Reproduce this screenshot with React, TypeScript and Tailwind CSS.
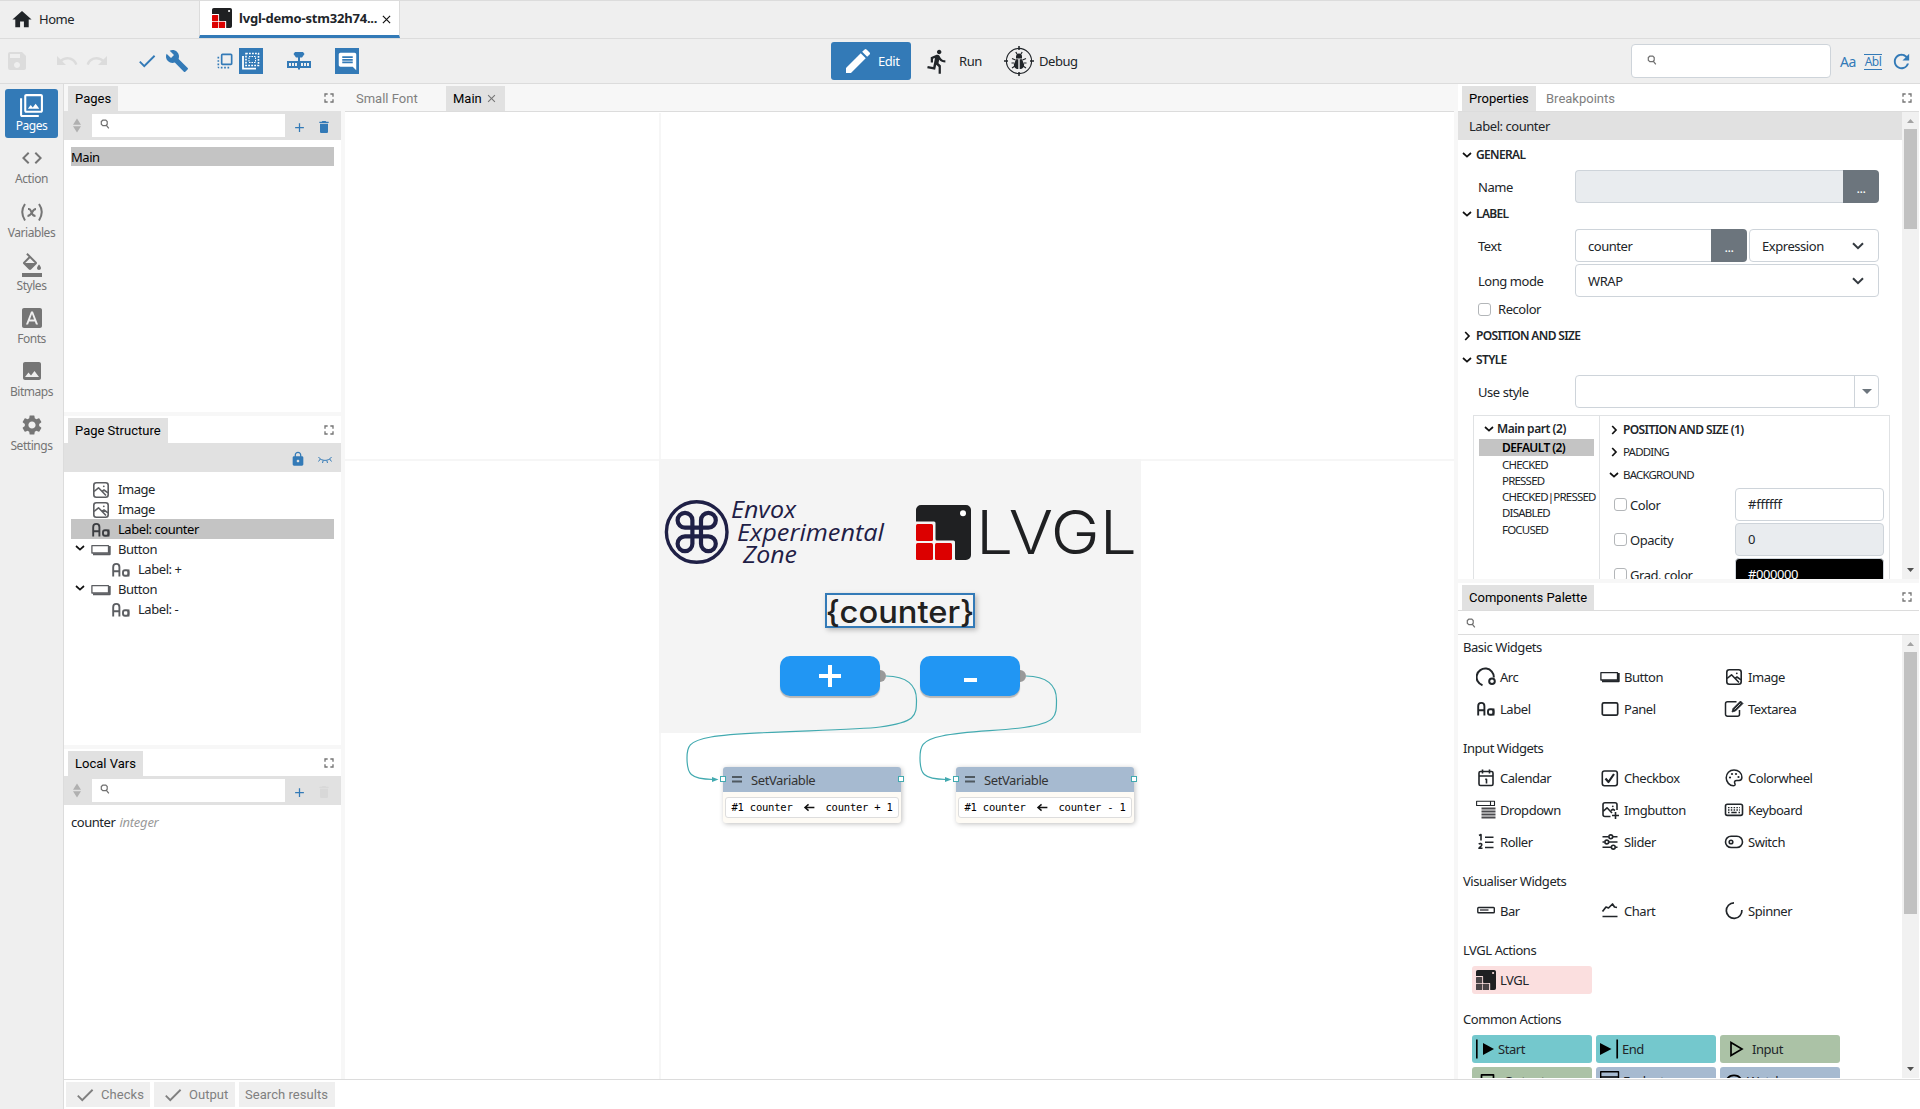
import React from "react";
import {
  MdHome, MdSave, MdUndo, MdRedo, MdCheck, MdBuild, MdFlipToFront, MdComment, MdFilter, MdCode,
  MdFormatColorFill, MdFontDownload, MdImage, MdSettings, MdEdit, MdDirectionsRun, MdRefresh, MdFullscreen,
  MdDelete, MdLock, MdAdd, MdClose,
} from "react-icons/md";

const SearchIcon = ({ className = "" }: { className?: string }) => (
  <svg viewBox="0 0 10 10" className={`h-[10px] w-[10px] shrink-0 ${className}`} fill="none" stroke="#6f6f6f" strokeWidth="1.2">
    <path d="M2.8 1.2H5.8L7.2 2.6V5.2L5.8 6.6H2.8L1.3 5.2V2.6ZM6.3 6.1L8.8 9.3" />
  </svg>
);

const Chevron = ({ open = true, className = "" }: { open?: boolean; className?: string }) => (
  <svg viewBox="0 0 10 10" className={`h-[10px] w-[10px] shrink-0 ${className}`} fill="none" stroke="#111" strokeWidth="1.7">
    <path d={open ? "M1 3L5 6.6L9 3" : "M3.2 1L7 5L3.2 9"} />
  </svg>
);

const Maximize = () => <MdFullscreen className="h-[16px] w-[16px] shrink-0 text-[#757575]" />;

const Sorter = () => (
  <svg viewBox="0 0 8 14" className="h-[15px] w-[8px] shrink-0" fill="#b0b0b0">
    <path d="M4 0L8 6.3H0ZM4 14L8 7.7H0Z" />
  </svg>
);

const LvglMark = ({ red = "#dc0000", gap = "#fff", className = "" }: { red?: string; gap?: string; className?: string }) => (
  <svg viewBox="0 0 55 55" className={`shrink-0 ${className}`}>
    <path fill="#1f2022" d="M5 0H50a5 5 0 0 1 5 5V50a5 5 0 0 1-5 5H40.500a1.500 1.500 0 0 1-1.500-1.500V37a1.500 1.500 0 0 0-1.500-1.500H21a1.500 1.500 0 0 1-1.500-1.500V18a1.500 1.500 0 0 0-1.500-1.500H0V5a5 5 0 0 1 5-5Z" />
    <g fill={red}>
      <rect y="19" width="17" height="17" rx="1.500" />
      <rect y="38" width="17" height="17" rx="1.500" />
      <rect x="19" y="38" width="17" height="17" rx="1.500" />
    </g>
    <circle cx="47" cy="8.200" r="3" fill={gap} />
  </svg>
);

const Ico = ({ children, className = "h-5 w-5", w = 1.7 }: { children: React.ReactNode; className?: string; w?: number }) => (
  <svg viewBox="0 0 20 20" className={`shrink-0 ${className}`} fill="none" stroke="currentColor" strokeWidth={w} strokeLinejoin="round">
    {children}
  </svg>
);

const ImageI = () => (
  <Ico w={1.6}>
    <rect x="2.800" y="2.800" width="14.400" height="14.400" rx="2.500" />
    <path d="M3 11.500L7.500 7.800L15 15.500M11 11.500L13 10L17 12.800" />
    <circle cx="12.800" cy="6.300" r="0.900" fill="currentColor" stroke="none" />
  </Ico>
);
const ButtonI = () => (
  <Ico w={1.3}>
    <path d="M0.900 5.700H17.500V13H0.900Z" />
    <path d="M18.700 6V14.300H2" strokeWidth="2" />
  </Ico>
);
const LabelI = () => (
  <Ico w={1.9}>
    <path d="M2.200 16.500V7A3.100 3.100 0 0 1 8.400 7V16.500M2.200 11.300H8.400" />
    <path d="M17.500 9.500V16.500" />
    <rect x="12" y="10.300" width="5.500" height="5.400" rx="2" />
  </Ico>
);

const icons: Record<string, React.ReactNode> = {
  Arc: <Ico w={2}><path d="M6.500 18.300A8.600 8.600 0 1 1 17.800 10.500" /><circle cx="16" cy="14.300" r="2.800" /></Ico>,
  Button: <ButtonI />,
  Image: <ImageI />,
  Label: <LabelI />,
  Panel: <Ico><rect x="2.300" y="3.800" width="15.400" height="12.400" rx="1.500" /></Ico>,
  Textarea: <Ico w={1.500}><path d="M12.500 2.800H3.500A2 2 0 0 0 1.500 4.800V15.200A2 2 0 0 0 3.500 17.200H13.500A2 2 0 0 0 15.500 15.200V11" /><path d="M8 13L9 9.500L16.500 2L19 4.500L11.500 12Z" fill="currentColor" strokeWidth="0.800" /><path d="M10.500 10.500L16.500 4.500" stroke="#fff" strokeWidth="0.700" /></Ico>,
  Calendar: <Ico w={1.6}><rect x="3" y="3.500" width="14" height="14" rx="1.500" /><path d="M3 8H17M6.500 1.500V5.500M13.500 1.500V5.500M9.200 11.300H10.500V15.500" /></Ico>,
  Checkbox: <Ico w={1.6}><rect x="2.300" y="3" width="15" height="14.800" rx="2.200" /><path d="M5.500 10.500L8.500 14L14 6" strokeWidth="2.200" /></Ico>,
  Colorwheel: <Ico w={1.500}><path d="M10 2C5.500 2 2.200 5.300 2.200 9.800C2.200 14 5.500 17.800 9.500 17.800C11.500 17.800 11.300 16.300 10.700 15.200C10 13.500 11 12.500 12.500 12.500H15C17 12.500 17.900 11 17.900 9.300C17.900 5 14.500 2 10 2Z" /><g fill="currentColor" stroke="none"><circle cx="6" cy="9.500" r="1.100" /><circle cx="8" cy="6" r="1.100" /><circle cx="12" cy="6" r="1.100" /><circle cx="14.500" cy="9" r="1.100" /></g></Ico>,
  Dropdown: <Ico w={1.100}><path d="M0.600 1.200H18.500V5.500H0.600ZM14.500 1.200V5.500" /><path d="M5.500 8.500H19.500M5.500 11.500H19.500M5.500 14.500H19.500M5.500 17.500H19.500" strokeWidth="2" stroke="#4b4b4f" /></Ico>,
  Imgbutton: <Ico w={1.6}><path d="M17 10V4.800A2 2 0 0 0 15 2.800H5A2 2 0 0 0 3 4.800V14.500A2 2 0 0 0 5 16.500H10.500M3 11.500L7 7.800L12 13M11 10.500L13 9.300L15 10.500M15.500 12V19M12 15.500H19" /><circle cx="12.800" cy="6.300" r="0.900" fill="currentColor" stroke="none" /></Ico>,
  Keyboard: <Ico w={1.6}><rect x="1.500" y="4.200" width="17" height="11.200" rx="1.800" /><path d="M4 7.700H16M4 10H16" strokeDasharray="1.500 1.300" strokeWidth="1.300" /><path d="M4 12.500H5.500M7.300 12.500H12.700M14.500 12.500H16" strokeWidth="1.300" /></Ico>,
  Roller: <Ico w={1.6}><path d="M9 5.200H17.500M9 10.200H17.500M9 15.500H17.500M3 3.500L5 2.500V8.500M2.800 12.300C3.800 11 6 11.500 5.800 13C5.700 14 4 15 3 16.300H6.500" /></Ico>,
  Slider: <Ico w={1.6}><path d="M2.500 4.800H8.500M13 4.800H17.500M2.500 10H4.500M9 10H17.500M2.500 15.200H11M15.500 15.200H17.500" /><circle cx="10.800" cy="4.800" r="1.900" /><circle cx="6.800" cy="10" r="1.900" /><circle cx="13.300" cy="15.200" r="1.900" /></Ico>,
  Switch: <Ico w={1.6}><rect x="1.500" y="4.300" width="17" height="11.200" rx="5.600" /><circle cx="7" cy="10" r="1.800" /></Ico>,
  Bar: <Ico w={1.400}><rect x="1.800" y="6.500" width="16.500" height="5.200" rx="0.800" /><path d="M4 9H12.500" strokeWidth="2" stroke="#77777b" /></Ico>,
  Chart: <Ico><path d="M2.500 10.500L6 6L8.500 7L12.500 3L14.500 6L17 6.500M2.500 15.500H17.500" /></Ico>,
  Spinner: <Ico><path d="M10 1.800A7.800 7.800 0 1 0 17.900 9" /></Ico>,
  LVGL: <LvglMark red="#4a4446" gap="#fbdfdf" className="h-5 w-5" />,
  Start: <Ico><path d="M0.800 0.500V19.500" stroke="#000" /><path d="M7 4L18 10L7 16Z" fill="#000" stroke="none" /></Ico>,
  End: <Ico><path d="M17.200 0.500V19.500" stroke="#000" /><path d="M0 4L11.500 10L0 16Z" fill="#000" stroke="none" /></Ico>,
  Input: <Ico><path d="M7 3.500L18 10L7 16.500Z" stroke="#000" strokeLinejoin="miter" /></Ico>,
  Output: <Ico><rect x="5.500" y="3.800" width="12" height="13" stroke="#000" /></Ico>,
  Evaluate: <Ico className="h-5 w-5" w={1.400}><path d="M0.700 0.700H18.500V18H0.700ZM0.700 6H18.500" stroke="#000" /></Ico>,
  Watch: <Ico><path d="M2 10C5 2.500 15 2.500 18 10C15 17 5 17 2 10Z" stroke="#000" /></Ico>,
};

const tint: Record<string, string> = {
  LVGL: "bg-[#fbdfdf]", Start: "bg-[#74c8cd]", End: "bg-[#74c8cd]", Input: "bg-[#abc2a6]", Output: "bg-[#abc2a6]",
  Evaluate: "bg-[#a6bad0]", Watch: "bg-[#a6bad0]",
};
const indent: Record<string, string> = { Start: "ml-[2px]", End: "ml-[2px]", Input: "ml-[8px]", Output: "ml-[8px]", Evaluate: "ml-[3px]", Watch: "ml-[3px]" };

const sections: [string, string[]][] = [
  ["Basic Widgets", ["Arc", "Button", "Image", "Label", "Panel", "Textarea"]],
  ["Input Widgets", ["Calendar", "Checkbox", "Colorwheel", "Dropdown", "Imgbutton", "Keyboard", "Roller", "Slider", "Switch"]],
  ["Visualiser Widgets", ["Bar", "Chart", "Spinner"]],
  ["LVGL Actions", ["LVGL"]],
  ["Common Actions", ["Start", "End", "Input", "Output", "Evaluate", "Watch"]],
];

const Tab = ({ children, active = false, className = "" }: { children: React.ReactNode; active?: boolean; className?: string }) => (
  <div className={`flex h-[25px] items-center px-[7px] font-['Roboto'] text-[13px] tracking-[0px] ${active ? "bg-[#e1e1e1] text-black" : "text-[#808080]"} ${className}`}>
    {children}
  </div>
);

const PanelHead = ({ title, gray = false }: { title: string; gray?: boolean }) => (
  <div className={`flex h-[27px] shrink-0 items-end justify-between pl-1 ${gray ? "bg-[#f7f7f7]" : "bg-white"}`}>
    <Tab active>{title}</Tab>
    <div className="flex h-[27px] items-center pr-[4px]"><Maximize /></div>
  </div>
);

const ListTools = ({ disabled = false }: { disabled?: boolean }) => (
  <div className="flex h-[29px] shrink-0 items-center bg-[#e1e1e1] pl-[9px]">
    <Sorter />
    <div className="ml-[11px] flex h-[23px] w-[193px] items-center bg-white pl-[8px]"><SearchIcon className="mb-[3px]" /></div>
    <MdAdd className="ml-[7px] mt-[3px] h-[15px] w-[15px] text-[#337ab7]" />
    <MdDelete className={`ml-[9px] mt-[3px] h-[16px] w-[16px] ${disabled ? "text-[#d8d8d8]" : "text-[#337ab7]"}`} />
  </div>
);

const NavItem = ({ icon, label, active = false }: { icon: React.ReactNode; label: string; active?: boolean }) => (
  <div className={`mx-auto mb-[4.300px] flex h-[49px] w-[53px] shrink-0 flex-col items-center rounded-[3px] text-[12px] tracking-[-0.450px] ${active ? "bg-[#337ab7] text-white" : "text-[#757575]"}`}>
    <div className="mt-[4px] flex h-6 items-center">{icon}</div>
    <div className="mt-px leading-[16px]">{label}</div>
  </div>
);

const TreeRow = ({ icon, label, depth = 0, open = false, selected = false }: { icon: React.ReactNode; label: string; depth?: number; open?: boolean; selected?: boolean }) => (
  <div className={`flex h-5 items-center ${selected ? "bg-[#c4c4c4] text-black" : ""}`}>
    <div className={`flex justify-end ${depth ? "w-[34px]" : "w-[14px]"}`}>{open && <Chevron className="mb-[3px]" />}</div>
    <div className={`ml-[6px] mt-[2px] flex h-5 w-5 items-center ${selected ? "text-[#3c3e42]" : "text-[#5c5e62]"}`}>{icon}</div>
    <span className="ml-[7px] pt-[2px]">{label}</span>
  </div>
);

const Heading = ({ children, open = true, className = "" }: { children: React.ReactNode; open?: boolean; className?: string }) => (
  <div className={`flex items-center gap-[4px] pl-[4px] text-[12px] font-semibold tracking-[-0.650px] ${className}`}>
    <Chevron open={open} />
    {children}
  </div>
);

const Label = ({ children }: { children: React.ReactNode }) => <span className="w-[96px] -translate-x-px pt-[2px]">{children}</span>;

const Box = ({ children, className = "" }: { children?: React.ReactNode; className?: string }) => (
  <div className={`flex h-[33px] items-center border border-[#ced4da] px-[12px] ${className}`}>{children}</div>
);
const Dots = () => <div className="flex h-[33px] w-[36px] shrink-0 items-center justify-center rounded-r-[4px] bg-[#6c757d] pt-[4px] text-white">...</div>;
const SelectArrow = () => (
  <svg viewBox="0 0 12 8" className="mb-[2px] ml-auto mr-[2px] h-[8px] w-[12px]" fill="none" stroke="#343a40" strokeWidth="2"><path d="M1 1.200L6 6.200L11 1.200" /></svg>
);
const Check = ({ className = "" }: { className?: string }) => <div className={`h-[13px] w-[13px] shrink-0 rounded-[3px] border border-[#b3b6b9] bg-white ${className}`} />;

const StyleRow = ({ label, value, className = "" }: { label: string; value: string; className?: string }) => (
  <div className="flex items-center pl-[15px]">
    <Check className="-ml-px" />
    <span className="ml-[3px] w-[105px] pt-[2px]">{label}</span>
    <Box className={`w-[149px] rounded-[4px] pt-px ${className}`}>{value}</Box>
  </div>
);

const ScrollBar = ({ thumb }: { thumb: string }) => (
  <div className="flex w-[17px] shrink-0 flex-col items-center bg-[#f1f1f1]">
    <svg viewBox="0 0 17 17" className="h-[17px] w-[17px]" fill="#a3a3a3"><path d="M5 11L8.500 7L12 11Z" /></svg>
    <div className={`w-[13px] bg-[#c1c1c1] ${thumb}`} />
    <svg viewBox="0 0 17 17" className="mt-auto h-[17px] w-[17px]" fill="#505050"><path d="M5 6L8.500 10L12 6Z" /></svg>
  </div>
);

const SetVariable = ({ expr, className }: { expr: string; className: string }) => (
  <div className={`absolute top-[655px] h-[56px] w-[178px] rounded-[3px] bg-[#fefbf5] shadow-[1px_1px_5px_rgba(0,0,0,0.25)] ${className}`}>
    <div className="flex h-[25px] items-center rounded-t-[3px] bg-[#a6bad0] pl-[9px] text-[#333]">
      <svg viewBox="0 0 10 7" className="h-[7px] w-[10px]" fill="#4f5961"><path d="M0 0H10V2H0ZM0 4.500H10V6.500H0Z" /></svg>
      <span className="ml-[9px] pt-[2px] tracking-[-0.400px]">SetVariable</span>
    </div>
    <div className="mx-[2px] mt-[5px] flex h-[21px] items-center whitespace-nowrap rounded-[3px] border border-[#ddd] bg-white pl-[5.500px] font-['DejaVu_Sans_Mono'] text-[10.500px] tracking-[-0.220px] text-black">
      #1 counter
      <svg viewBox="0 0 12 10" className="ml-[10.500px] mr-[10.500px] h-[9px] w-[12px]" fill="none" stroke="#111" strokeWidth="1.600"><path d="M12 5H2M5.500 1.500L1.500 5L5.500 8.500" /></svg>
      {expr}
    </div>
    <div className="absolute -left-[3px] top-[9px] h-[6px] w-[6px] border border-[#42aab0] bg-white" />
    <div className="absolute -right-[3px] top-[9px] h-[6px] w-[6px] border border-[#42aab0] bg-white" />
  </div>
);

const CanvasButton = ({ sign, className }: { sign: React.ReactNode; className: string }) => (
  <>
    <div className={`absolute top-[558px] h-[12px] w-[12px] rounded-full bg-[#999] ${className}`} />
    <div className={`absolute top-[544px] -ml-[94px] flex h-[40px] w-[100px] items-center justify-center rounded-[10px] bg-[#2196f3] shadow-[0_2px_1px_rgba(0,0,0,0.25)] ${className}`}>{sign}</div>
  </>
);

function Canvas() {
  return (
    <div className="relative min-h-0 flex-1 overflow-hidden bg-white">
      <div className="absolute left-[314px] top-[1px] h-full w-[2px] bg-[#f6f6f6]" />
      <div className="absolute left-0 top-[347px] h-[2px] w-full bg-[#f6f6f6]" />
      <div className="absolute left-[314px] top-[347px] h-[274px] w-[482px] bg-[#f4f4f4]" />

      <svg className="absolute left-[319px] top-[388px] h-[80px] w-[230px]" viewBox="664 500 230 80">
        <g fill="none" stroke="#1f2046">
          <circle cx="696.700" cy="532" r="30.300" strokeWidth="3.400" />
          <path transform="translate(696.700 532)" strokeWidth="4.200" d="M-4.300-11.700V11.700A7.400 7.400 0 1 1-11.700 4.300H11.700A7.400 7.400 0 1 1 4.300 11.700V-11.700A7.400 7.400 0 1 1 11.700-4.300H-11.700A7.400 7.400 0 1 1-4.300-11.700Z" />
        </g>
        <g className="font-['Open_Sans'] text-[24px] italic tracking-[0px]" fill="#1f2046">
          <text x="731" y="518.300" textLength="65" lengthAdjust="spacingAndGlyphs">Envox</text>
          <text x="737" y="540.500" textLength="147" lengthAdjust="spacingAndGlyphs">Experimental</text>
          <text x="743" y="563" textLength="54" lengthAdjust="spacingAndGlyphs">Zone</text>
        </g>
      </svg>

      <LvglMark className="absolute left-[571px] top-[393px] h-[55px] w-[55px]" />
      <svg className="absolute left-[631px] top-[383px] h-[75px] w-[165px]" viewBox="976 495 165 75">
        <text x="976" y="554.300" textLength="161" lengthAdjust="spacingAndGlyphs" fill="#1f2022" className="font-['Inter'] text-[60px] font-light tracking-[0px]">LVGL</text>
      </svg>

      <div className="absolute left-[480px] top-[481px] h-[35px] w-[150px] border-2 border-[#337ab7] bg-[#f4f4f4] shadow-[2px_2px_5px_rgba(0,0,0,0.25)]" />
      <svg className="absolute left-[480px] top-[481px] h-[40px] w-[150px]" viewBox="0 0 150 40">
        <text x="0.500" y="29.500" textLength="149" lengthAdjust="spacingAndGlyphs" fill="#212121" className="font-['Inter'] text-[31px] font-medium tracking-[0px]">{"{counter}"}</text>
      </svg>

      <CanvasButton className="left-[529px]" sign={<svg viewBox="0 0 22 22" className="h-[22px] w-[22px]" fill="#fff"><path d="M9 0H13V9H22V13H13V22H9V13H0V9H9Z" /></svg>} />
      <CanvasButton className="left-[669px]" sign={<div className="mt-[8px] h-[4px] w-[13px] bg-white" />} />

      <SetVariable className="left-[378px]" expr="counter + 1" />
      <SetVariable className="left-[611px]" expr="counter - 1" />

      <svg className="absolute left-[335px] top-[552px] h-[140px] w-[400px]" viewBox="680 664 400 140" fill="none" stroke="#42aab0" strokeWidth="1.200">
        <path d="M886 676C908 676.500 916.500 686 916.500 700C916.500 717 915 722 880 727C850 731 742 731 711 737C688 741 687 747 687 758C687 774 690 779 713 779.500" />
        <path d="M1026 676C1048 676.500 1056.500 686 1056.500 700C1056.500 717 1056 723 1024 727.500C1000 731 966 731 942 736C921 740 920 747 920 758C920 774 923 779 946 779.500" />
        <path fill="#42aab0" stroke="none" d="M712 777L718.500 779.500L712 782ZM945 777L951.500 779.500L945 782Z" />
      </svg>
    </div>
  );
}

export default function App() {
  return (
    <div className="flex h-[1109px] w-[1920px] flex-col overflow-hidden bg-white font-['Noto_Sans',sans-serif] text-[13px] tracking-[-0.450px] text-[#212529]">
      <div className="flex h-[39px] shrink-0 border-b border-t border-[#dcdcdc] bg-[#efefef]">
        <div className="flex w-[199px] items-center pl-[10px]">
          <MdHome className="h-[23px] w-[24px]" />
          <span className="ml-[5px]">Home</span>
        </div>
        <div className="flex w-[201px] items-center border-x border-b-[3px] border-x-[#dcdcdc] border-b-[#337ab7] bg-white pl-[12px]">
          <LvglMark className="h-5 w-5" />
          <span className="ml-[7px] w-[138px] whitespace-nowrap pt-px font-bold tracking-[-0.200px]">lvgl-demo-stm32h74...</span>
          <svg viewBox="0 0 10 10" className="ml-[5px] mt-[3px] h-[9px] w-[9px]" stroke="#111" strokeWidth="1.300"><path d="M1 1L9 9M9 1L1 9" /></svg>
        </div>
      </div>

      <div className="flex h-[45px] shrink-0 items-center border-b border-[#dcdcdc] bg-[#efefef]">
        <div className="flex w-[831px] items-center text-[#337ab7]">
          <MdSave className="ml-[5px] h-6 w-6 text-[#dcdcdc]" />
          <MdUndo className="ml-[26px] h-6 w-6 text-[#dcdcdc]" />
          <MdRedo className="ml-[6px] h-6 w-6 text-[#dcdcdc]" />
          <MdCheck className="ml-[27px] h-[22px] w-[22px]" />
          <MdBuild className="ml-[7px] h-6 w-6" />
          <MdFlipToFront className="ml-[26px] h-[20px] w-[20px]" />
          <div className="ml-[4px] flex h-[26px] w-[24px] items-center justify-center bg-[#337ab7]">
            <svg viewBox="0 0 20 20" className="h-5 w-5" fill="none" stroke="#fff" strokeWidth="1.600"><path d="M5 2.500H17.500V14.500H5Z" strokeDasharray="1.800 1.200" /><path d="M8 5.500H14.500V11.500H8Z" strokeDasharray="1.500 1" strokeWidth="1" /><path d="M2 5V17.700H15" strokeWidth="1.800" /></svg>
          </div>
          <svg viewBox="0 0 24 18" className="ml-[24px] h-[18px] w-[24px]" fill="currentColor"><path d="M8 0H16L17.500 2L15 5.500H13V9H24V16H13V17.500H11V16H0V9H11V5.500H9L6.500 2Z" /><path fill="#efefef" d="M2 11H4V14H2ZM5 11H7V14H5ZM8 11H10V14H8ZM14 11H16V14H14ZM17 11H19V14H17ZM20 11H22V14H20Z" /></svg>
          <div className="ml-[24px] flex h-[26px] w-[24px] items-center justify-center bg-[#337ab7] text-white"><MdComment className="h-[21px] w-[21px]" /></div>
        </div>
        <div className="flex h-[38px] w-[80px] items-center rounded-[3px] bg-[#337ab7] text-white">
          <MdEdit className="ml-[11px] h-[32px] w-[32px]" />
          <span className="ml-[4px] pt-px">Edit</span>
        </div>
        <MdDirectionsRun className="ml-[13px] h-[27px] w-[27px]" />
        <span className="ml-[8px] w-[24px] pt-px">Run</span>
        <svg viewBox="0 0 30 30" className="ml-[21px] h-[30px] w-[30px]" fill="none" stroke="#212529">
          <circle cx="15" cy="15" r="12.600" strokeWidth="1.100" />
          <path strokeWidth="1.500" d="M15 0V4M15 26V30M0 15H4M26 15H30" />
          <path fill="#212529" stroke="none" d="M12 10.500A3 3 0 0 1 18 10.500V12.500H12ZM12 13.300H14.300V23C12 23.500 9.800 21.500 9.800 18.500ZM18 13.300H15.700V23C18 23.500 20.200 21.500 20.200 18.500Z" />
          <path strokeWidth="1.200" d="M13 8L11.800 6M17 8L18.200 6M11.500 14L8 12.500M18.500 14L22 12.500M10 17H7.500M20 17H22.500M11 20L8 22M19 20L22 22" />
        </svg>
        <span className="ml-[5px] pt-px">Debug</span>
        <div className="ml-auto flex h-[34px] w-[200px] items-center rounded-[4px] border border-[#ced4da] bg-white pl-[15px]"><SearchIcon className="mb-[2px]" /></div>
        <span className="ml-[9px] w-[18px] text-[14px] text-[#337ab7]">Aa</span>
        <span className="ml-[6px] mt-[2px] w-[18px] border-y border-[#337ab7] text-center text-[12px] leading-[14px] tracking-[-0.500px] text-[#337ab7]">Abl</span>
        <MdRefresh className="ml-[8px] mr-[7px] h-[23px] w-[23px] text-[#337ab7]" />
      </div>

      <div className="flex min-h-0 flex-1">
        <div className="flex w-[64px] shrink-0 flex-col border-r border-[#dcdcdc] bg-[#efefef] pt-[5px]">
          <NavItem active label="Pages" icon={<MdFilter className="h-[25px] w-[25px]" />} />
          <NavItem label="Action" icon={<MdCode className="h-6 w-6" />} />
          <NavItem
            label="Variables"
            icon={
              <svg viewBox="0 0 24 24" className="h-6 w-6" fill="none" stroke="currentColor" strokeWidth="2">
                <path d="M5 4C1.500 9 1.500 15 5 20.500M19 4C22.500 9 22.500 15 19 20.500M8 9H9C10.500 9 10.500 10 11.500 12.500C12.500 15.500 13.500 16 15.500 16M7.500 16C9.500 16 11 14 12 12.500C13 10.500 14 9 16 9" />
              </svg>
            }
          />
          <NavItem label="Styles" icon={<MdFormatColorFill className="h-6 w-6" />} />
          <NavItem label="Fonts" icon={<MdFontDownload className="h-6 w-6" />} />
          <NavItem label="Bitmaps" icon={<MdImage className="h-6 w-6" />} />
          <NavItem label="Settings" icon={<MdSettings className="h-6 w-6" />} />
        </div>

        <div className="flex min-w-0 flex-1 flex-col">
          <div className="flex min-h-0 flex-1">
            <div className="flex w-[277px] shrink-0 flex-col">
              <div className="flex h-[328px] shrink-0 flex-col">
                <PanelHead title="Pages" gray />
                <ListTools />
                <div className="mx-[7px] mt-[7px] flex h-[19px] items-center bg-[#c4c4c4] pt-[2px] text-black">Main</div>
              </div>
              <div className="h-[4px] shrink-0 bg-[#f7f7f7]" />
              <div className="flex h-[329px] shrink-0 flex-col">
                <PanelHead title="Page Structure" />
                <div className="flex h-[29px] shrink-0 items-center justify-end bg-[#e1e1e1] pr-[9px] pt-[3px] text-[#337ab7]">
                  <MdLock className="h-[16px] w-[16px]" />
                  <svg viewBox="0 0 14 8" className="ml-[12px] mt-px h-[8px] w-[14px]" fill="none" stroke="currentColor" strokeWidth="1"><path d="M0.500 1C3 5.500 11 5.500 13.500 1M2.300 3L0.500 5.500M5.200 4.500L4.500 7M8.800 4.500L9.500 7M11.700 3L13.500 5.500" /></svg>
                </div>
                <div className="mx-[7px] mt-[7px]">
                  <TreeRow icon={<ImageI />} label="Image" />
                  <TreeRow icon={<ImageI />} label="Image" />
                  <TreeRow icon={<LabelI />} label="Label: counter" selected />
                  <TreeRow icon={<ButtonI />} label="Button" open />
                  <TreeRow icon={<LabelI />} label="Label: +" depth={1} />
                  <TreeRow icon={<ButtonI />} label="Button" open />
                  <TreeRow icon={<LabelI />} label="Label: -" depth={1} />
                </div>
              </div>
              <div className="h-[4px] shrink-0 bg-[#f7f7f7]" />
              <PanelHead title="Local Vars" />
              <ListTools disabled />
              <div className="mx-[7px] mt-[8px] flex h-[19px] items-center gap-[4px]">
                counter <span className="italic tracking-[-0.250px] text-[#999]">integer</span>
              </div>
            </div>
            <div className="w-[4px] shrink-0 bg-[#f7f7f7]" />

            <div className="flex w-[1109px] shrink-0 flex-col">
              <div className="flex h-[28px] shrink-0 items-end border-b border-[#dcdcdc] bg-[#f7f7f7] pl-[4px]">
                <Tab className="w-[97px]">Small Font</Tab>
                <Tab active className="w-[59px] justify-between">
                  Main <MdClose className="h-[13px] w-[13px] text-[#757575]" />
                </Tab>
              </div>
              <Canvas />
            </div>
            <div className="w-[4px] shrink-0 bg-[#f7f7f7]" />

            <div className="flex w-[461px] shrink-0 flex-col">
              <div className="flex h-[28px] shrink-0 items-end border-b border-[#dcdcdc] pl-[4px]">
                <Tab active className="w-[74px]">Properties</Tab>
                <Tab className="ml-[3px]">Breakpoints</Tab>
                <div className="ml-auto flex h-[27px] items-center pr-[4px]"><Maximize /></div>
              </div>
              <div className="flex h-[467px] shrink-0">
                <div className="w-[444px] overflow-hidden">
                  <div className="flex h-[28px] items-center bg-[#e1e1e1] pl-[11px] pt-[2px]">Label: counter</div>
                  <Heading className="h-[30px]">GENERAL</Heading>
                  <div className="flex items-center pl-[21px]">
                    <Label>Name</Label>
                    <Box className="w-[268px] rounded-l-[4px] border-r-0 bg-[#e9ecef]" />
                    <Dots />
                  </div>
                  <Heading className="h-[26px] pb-[4px]">LABEL</Heading>
                  <div className="flex items-center pl-[21px]">
                    <Label>Text</Label>
                    <Box className="w-[136px] rounded-l-[4px] border-r-0 pt-[2px]">counter</Box>
                    <Dots />
                    <Box className="ml-[2px] w-[130px] rounded-[4px] pt-[2px]">Expression<SelectArrow /></Box>
                  </div>
                  <div className="mt-[2px] flex items-center pl-[21px]">
                    <Label>Long mode</Label>
                    <Box className="w-[304px] rounded-[4px] pt-[2px]">WRAP<SelectArrow /></Box>
                  </div>
                  <div className="flex h-[25px] items-center pl-[20px]"><Check className="mb-px mr-[7px]" />Recolor</div>
                  <Heading open={false} className="h-[28px]">POSITION AND SIZE</Heading>
                  <Heading className="h-[25px] pb-[5px]">STYLE</Heading>
                  <div className="flex items-center pl-[21px]">
                    <Label>Use style</Label>
                    <Box className="w-[304px] rounded-[4px] pr-0">
                      <div className="ml-auto flex h-full w-[24px] items-center justify-center border-l border-[#ced4da]">
                        <svg viewBox="0 0 10 5" className="mb-px h-[5px] w-[10px]" fill="#6c757d"><path d="M0 0H10L5 5Z" /></svg>
                      </div>
                    </Box>
                  </div>
                  <div className="ml-[15px] mt-[7px] flex h-[200px] w-[417px] border border-[#e0e2e4] text-[11.500px] tracking-[-0.800px]">
                    <div className="w-[126px] shrink-0 border-r border-[#e0e2e4] px-[5px] pt-[3px]">
                      <div className="flex h-[20px] items-center gap-[3px] pl-[5px] text-[12px] font-semibold tracking-[-0.450px]"><Chevron />Main part (2)</div>
                      <div className="flex h-[17px] items-center bg-[#c4c4c4] pl-[23px] text-[12px] font-semibold tracking-[-0.600px] text-black">DEFAULT (2)</div>
                      {["CHECKED", "PRESSED", "CHECKED|PRESSED", "DISABLED", "FOCUSED"].map((s) => (
                        <div key={s} className="flex h-[16.300px] items-center whitespace-nowrap pl-[23px]">{s}</div>
                      ))}
                    </div>
                    <div className="w-[289px] pt-[2px]">
                      <div className="flex h-[23px] items-center gap-[4px] pl-[9px] text-[12px] font-semibold tracking-[-0.600px]"><Chevron open={false} />POSITION AND SIZE (1)</div>
                      <div className="flex h-[22px] items-center gap-[4px] pl-[9px]"><Chevron open={false} />PADDING</div>
                      <div className="flex h-[25px] items-center gap-[4px] pb-px pl-[9px]"><Chevron />BACKGROUND</div>
                      <div className="flex flex-col gap-[2px] text-[13px] tracking-[-0.450px]">
                        <StyleRow label="Color" value="#ffffff" className="tracking-[-0.200px]" />
                        <StyleRow label="Opacity" value="0" className="bg-[#e9ecef]" />
                        <StyleRow label="Grad. color" value="#000000" className="bg-black text-white" />
                      </div>
                    </div>
                  </div>
                </div>
                <ScrollBar thumb="h-[100px]" />
              </div>
              <div className="h-[4px] shrink-0 bg-[#f7f7f7]" />
              <PanelHead title="Components Palette" />
              <div className="flex h-[25px] shrink-0 items-center border-y border-[#dcdcdc] pl-[8px]"><SearchIcon /></div>
              <div className="flex h-[443px] shrink-0">
                <div className="w-[444px] overflow-hidden pt-[2px]">
                  {sections.map(([title, items]) => (
                    <div key={title} className="mb-[15px]">
                      <div className="flex h-[26px] items-start pl-[5px] leading-[20px]">{title}</div>
                      <div className="ml-[14px] grid grid-cols-[120px_120px_120px] gap-[4px]">
                        {items.map((it) => (
                          <div key={it} className={`flex h-[28px] items-center rounded-[3px] pl-[4px] ${tint[it] ?? ""}`}>
                            {icons[it]}
                            <span className={`pt-px ${indent[it] ?? "ml-[4px]"}`}>{it}</span>
                          </div>
                        ))}
                      </div>
                    </div>
                  ))}
                </div>
                <ScrollBar thumb="h-[262px]" />
              </div>
            </div>
          </div>

          <div className="flex h-[30px] shrink-0 items-start gap-[4px] border-t border-[#dcdcdc] bg-white pl-[2px] pt-[2px] font-['Roboto'] text-[13px] tracking-[0.050px] text-[#808080]">
            <div className="flex h-[25px] w-[84px] items-center bg-[#efefef] pl-[8px]"><MdCheck className="mr-[5px] h-[22px] w-[22px]" />Checks</div>
            <div className="flex h-[25px] w-[81px] items-center bg-[#efefef] pl-[8px]"><MdCheck className="mr-[5px] h-[22px] w-[22px]" />Output</div>
            <div className="flex h-[25px] w-[96px] items-center whitespace-nowrap bg-[#efefef] pl-[6px]">Search results</div>
          </div>
        </div>
      </div>
    </div>
  );
}
